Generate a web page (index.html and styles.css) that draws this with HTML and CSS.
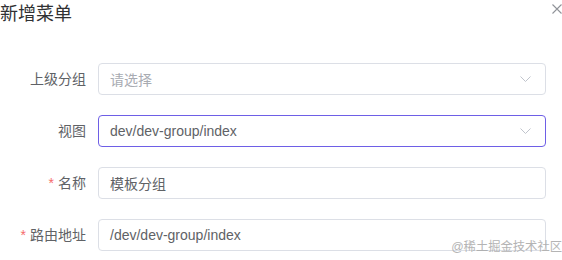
FILE: index.html
```html
<!DOCTYPE html>
<html lang="zh-CN">
<head>
  <meta charset="UTF-8">
  <title>新增菜单</title>
  <link rel="stylesheet" href="styles.css">
</head>
<body>
  <div class="dialog">
    <div class="dialog-header">
      <span class="dialog-title">新增菜单</span>
      <button class="close-btn" aria-label="关闭">
        <svg width="10" height="10" viewBox="0 0 10 10"><path d="M0.5 0.5 L9.5 9.5 M9.5 0.5 L0.5 9.5" stroke="#909399" stroke-width="1.1" fill="none"/></svg>
      </button>
    </div>

    <form class="form">
      <div class="form-item">
        <label class="form-label">上级分组</label>
        <div class="input select">
          <span class="placeholder">请选择</span>
          <svg class="arrow" width="11" height="6" viewBox="0 0 11 6"><path d="M0.5 0.5 L5.5 5.5 L10.5 0.5" stroke="#c0c4cc" stroke-width="1" fill="none"/></svg>
        </div>
      </div>

      <div class="form-item">
        <label class="form-label">视图</label>
        <div class="input select focused">
          <span class="value">dev/dev-group/index</span>
          <svg class="arrow" width="11" height="6" viewBox="0 0 11 6"><path d="M0.5 0.5 L5.5 5.5 L10.5 0.5" stroke="#c0c4cc" stroke-width="1" fill="none"/></svg>
        </div>
      </div>

      <div class="form-item">
        <label class="form-label required">名称</label>
        <div class="input">
          <span class="value">模板分组</span>
        </div>
      </div>

      <div class="form-item">
        <label class="form-label required">路由地址</label>
        <div class="input">
          <span class="value">/dev/dev-group/index</span>
        </div>
      </div>
    </form>

    <div class="watermark">@稀土掘金技术社区</div>
  </div>
</body>
</html>
```

FILE: styles.css
```css
body {
  margin: 0;
  background-color: #FFFFFF;
  font-family: "Liberation Sans", "Noto Sans CJK SC", sans-serif;
  color: #606266;
}
.dialog {
  position: relative;
  width: 562px;
  height: 260px;
  overflow: hidden;
}
.dialog-header {
  display: flex;
  justify-content: space-between;
  align-items: flex-start;
  height: 28px;
}
.dialog-title {
  font-size: 18px;
  line-height: 28px;
  color: #303133;
}
.close-btn {
  background: none;
  border: none;
  padding: 0;
  margin-top: 4px;
  width: 10px;
  height: 10px;
  display: flex;
  cursor: pointer;
}
.form {
  padding: 35px 16px 0 0;
}
.form-item {
  display: flex;
  margin-bottom: 20px;
}
.form-label {
  width: 86px;
  padding-right: 12px;
  text-align: right;
  font-size: 14px;
  line-height: 32px;
  color: #606266;
  flex-shrink: 0;
}
.form-label.required::before {
  content: "*";
  color: #F56C6C;
  margin-right: 4px;
}
.input {
  flex: 1;
  height: 32px;
  box-sizing: border-box;
  border: 1px solid #DCDFE6;
  border-radius: 4px;
  padding: 0 14px 0 11px;
  display: flex;
  align-items: center;
  justify-content: space-between;
  font-size: 14px;
}
.input.focused {
  border-color: #6E5FE6;
}
.placeholder {
  color: #A8ABB2;
}
.value {
  color: #606266;
}
.arrow {
  display: block;
}
.watermark {
  position: absolute;
  right: 0;
  bottom: 5px;
  font-size: 12.3px;
  line-height: 16px;
  color: #A8A8A8;
  opacity: 0.85;
}
```
